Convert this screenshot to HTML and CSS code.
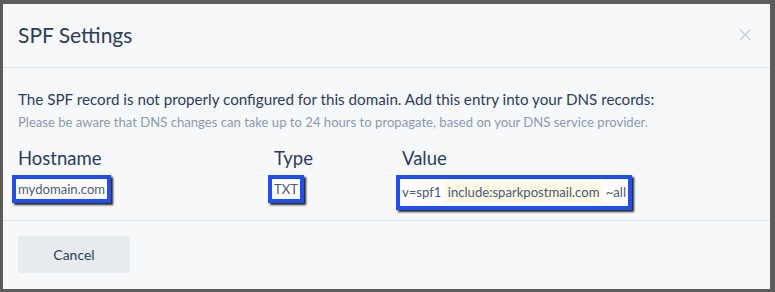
FILE: index.html
```html
<!DOCTYPE html>
<html>
<head>
    <title>SPF Settings</title>
    <meta charset="UTF-8">
    <link rel="stylesheet" href="styles.css">
</head>
<body>
    <div class="backdrop">
        <div class="modal">
            <div class="modal-header">
                <h2>SPF Settings</h2>
                <span class="close">&times;</span>
            </div>
            <div class="modal-body">
                <p class="lead">The SPF record is not properly configured for this domain. Add this entry into your DNS records:</p>
                <p class="note">Please be aware that DNS changes can take up to 24 hours to propagate, based on your DNS service provider.</p>
                <div class="record">
                    <div class="col col-host">
                        <h3>Hostname</h3>
                        <span class="mark">mydomain.com</span>
                    </div>
                    <div class="col col-type">
                        <h3>Type</h3>
                        <span class="mark">TXT</span>
                    </div>
                    <div class="col col-value">
                        <h3>Value</h3>
                        <span class="mark mark-value">v=spf1 <span class="hl">include:sparkpostmail.com</span> ~all</span>
                    </div>
                </div>
            </div>
            <div class="modal-footer">
                <button class="cancel-button">Cancel</button>
            </div>
        </div>
    </div>
</body>
</html>
```

FILE: styles.css
```css
body {
    margin: 0;
    font-family: Lato, "Noto Sans", sans-serif;
    color: #2b3d5b;
}
.backdrop {
    background: #5c5c5c;
    padding: 4px 5px 3px 3px;
    height: 285px;
}
.modal {
    background: #f7f8fa;
    height: 285px;
    display: flex;
    flex-direction: column;
}
.modal-header {
    height: 63px;
    border-bottom: 1px solid #dfe3e8;
    display: flex;
    align-items: center;
    justify-content: space-between;
    padding: 0 17px 0 15px;
}
.modal-header h2 {
    margin: 0 0 3px;
    font-size: 21px;
    font-weight: normal;
}
.close {
    color: #c2c7ce;
    font-size: 27px;
    font-weight: 300;
    margin-bottom: 4px;
}
.modal-body {
    height: 152px;
    border-bottom: 1px solid #dfe3e8;
    padding: 0 15px;
}
.lead {
    margin: 22px 0 0;
    font-size: 15.2px;
}
.note {
    margin: 6px 0 0;
    font-size: 13.1px;
    color: #8b9ab0;
}
.record {
    display: flex;
    margin-top: 17px;
}
.col h3 {
    margin: 0 0 6px;
    font-size: 18.5px;
    font-weight: normal;
}
.col-host {
    width: 256px;
}
.col-type {
    width: 128px;
}
.mark {
    display: inline-block;
    font-size: 13.1px;
    color: #4a5b75;
    background: #fff;
    border: 4px solid #1f4ff0;
    box-shadow: 2px 2px 2px #222;
    padding: 2px 2px 2px;
    margin-left: -6px;
}
.mark-value {
    padding: 5px 2px 6px;
}
.hl {
    background: #fdf8e3;
    padding: 2px 3px;
}
.modal-footer {
    flex: 1;
    padding: 15px 15px;
}
.cancel-button {
    width: 112px;
    height: 37px;
    border: none;
    border-radius: 3px;
    background: #e8ebee;
    font-family: Lato, "Noto Sans", sans-serif;
    font-size: 14px;
    color: #2b3d5b;
}
```
